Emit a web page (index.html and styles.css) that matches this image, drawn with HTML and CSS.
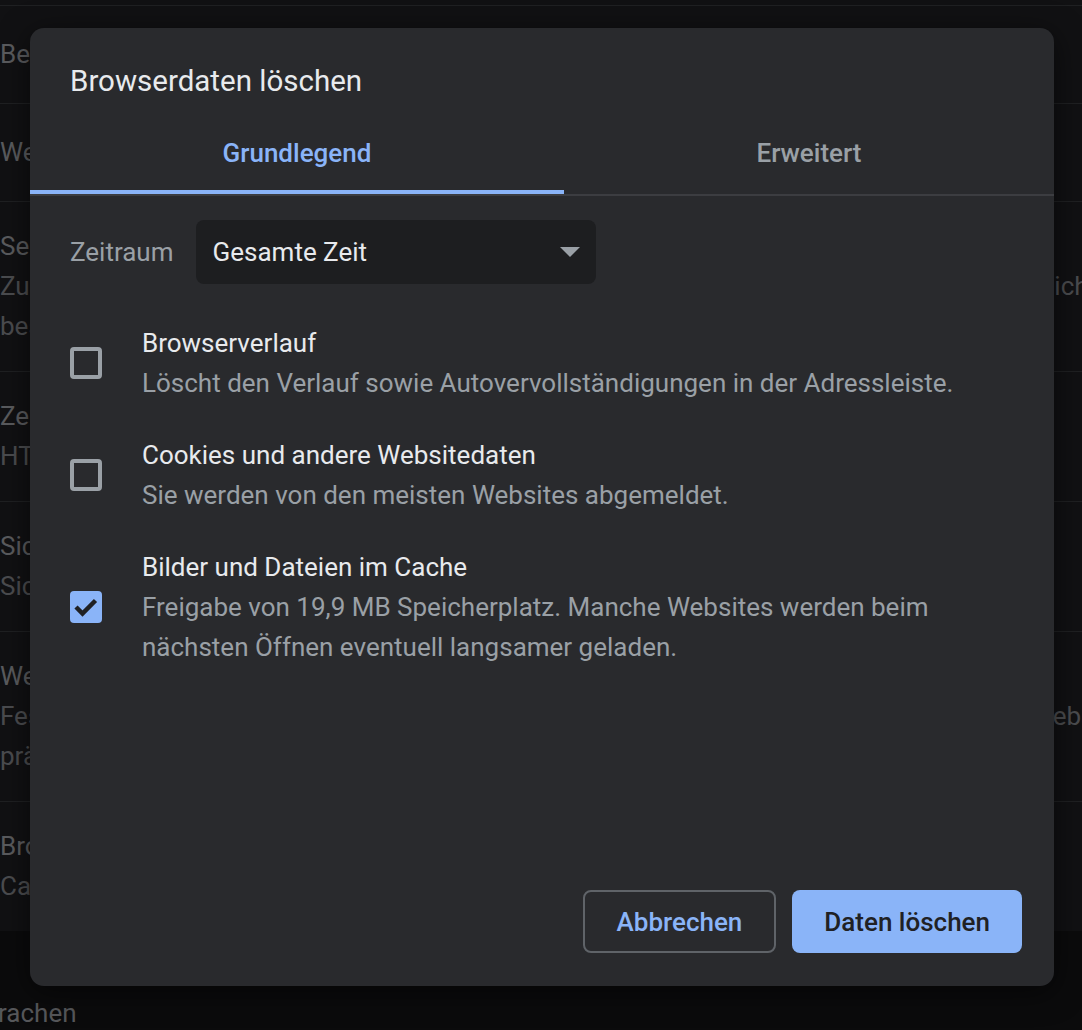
FILE: index.html
```html
<!DOCTYPE html>
<html lang="de">
<head>
<meta charset="utf-8">
<title>Browserdaten löschen</title>
<link rel="stylesheet" href="styles.css">
</head>
<body>
<div class="page">
  <div class="card">
    <div class="row single"><div class="primary">Bei der Suche und beim Eintippen in die Adressleiste Vervollständigungen verwenden</div></div>
    <div class="row single"><div class="primary">Websites die Überprüfung erlauben, ob Zahlungsmethoden gespeichert sind</div></div>
    <div class="row">
      <div class="primary">Seiten vorab laden, um das Surfen und die Suche zu beschleunigen</div>
      <div class="secondary line"><span class="lead lead-a">Zum Laden von Seiten werden Cookies verwendet, um Ihre Einstellungen zu speichern, auch wenn Sie diese Seiten</span><span>nicht besuchen</span></div>
      <div class="secondary">besuchen</div>
    </div>
    <div class="row">
      <div class="primary">Zertifikate verwalten</div>
      <div class="secondary">HTTPS/SSL-Zertifikate und -Einstellungen verwalten</div>
    </div>
    <div class="row">
      <div class="primary">Sicherheitsschlüssel verwalten</div>
      <div class="secondary">Sicherheitsschlüssel zurücksetzen und PINs erstellen</div>
    </div>
    <div class="row">
      <div class="primary">Website-Einstellungen</div>
      <div class="secondary line"><span class="lead lead-b">Festlegen, welche Informationen Websites nutzen und welche Inhalte sie Ihnen</span><span>Websites</span></div>
      <div class="secondary">präsentieren dürfen</div>
    </div>
    <div class="row">
      <div class="primary">Browserdaten löschen</div>
      <div class="secondary">Cache leeren, Cookies und andere Websitedaten löschen</div>
    </div>
  </div>
  <div class="heading">Sprachen</div>
</div>

<div class="dialog" role="dialog" aria-label="Browserdaten löschen">
  <div class="dialog-title">Browserdaten löschen</div>
  <div class="tabs">
    <div class="tab active">Grundlegend</div>
    <div class="tab">Erweitert</div>
  </div>
  <div class="dialog-body">
    <div class="range">
      <span class="range-label">Zeitraum</span>
      <div class="select">
        <span>Gesamte Zeit</span>
        <svg class="arrow" width="20" height="10" viewBox="0 0 20 10"><path d="M0 0 L20 0 L10 10 Z" fill="#9aa0a6"/></svg>
      </div>
    </div>
    <div class="items">
      <div class="item">
        <span class="box"></span>
        <div class="item-text">
          <div class="item-title">Browserverlauf</div>
          <div class="item-desc">Löscht den Verlauf sowie Autovervollständigungen in der Adressleiste.</div>
        </div>
      </div>
      <div class="item">
        <span class="box"></span>
        <div class="item-text">
          <div class="item-title">Cookies und andere Websitedaten</div>
          <div class="item-desc">Sie werden von den meisten Websites abgemeldet.</div>
        </div>
      </div>
      <div class="item">
        <span class="box checked"><svg width="32" height="32" viewBox="0 0 32 32"><path d="M6 16 L12.5 22.5 L25.5 9.5" fill="none" stroke="#202124" stroke-width="4.5"/></svg></span>
        <div class="item-text">
          <div class="item-title">Bilder und Dateien im Cache</div>
          <div class="item-desc">Freigabe von 19,9 MB Speicherplatz. Manche Websites werden beim nächsten Öffnen eventuell langsamer geladen.</div>
        </div>
      </div>
    </div>
  </div>
  <div class="actions">
    <button class="btn cancel">Abbrechen</button>
    <button class="btn action">Daten löschen</button>
  </div>
</div>
</body>
</html>
```

FILE: styles.css
```css
* { box-sizing: border-box; }
html, body {
  margin: 0;
  width: 1082px;
  height: 1030px;
  overflow: hidden;
  background: #0b0b0c;
  font-family: Roboto, "Noto Sans", "Liberation Sans", sans-serif;
}
body { position: relative; }

.page {
  margin-left: -40px;
  width: 1160px;
}
.card {
  background: #111113;
  padding-top: 5px;
}
.row {
  border-top: 1px solid #1f2022;
  padding: 24px 0 25px 40px;
  font-size: 26px;
  line-height: 40px;
  white-space: nowrap;
  overflow: hidden;
}
.row.single { padding: 28px 0 29px 40px; }
.primary { color: #5a5b5e; }
.secondary { color: #4b4c4f; }
.line { display: flex; }
.lead { display: inline-block; overflow: hidden; flex: none; }
.lead-a { width: 1040px; }
.lead-b { width: 1030px; }

.heading {
  padding: 62px 0 0 8px;
  font-size: 26px;
  color: #56575a;
  line-height: 40px;
}

.dialog {
  position: absolute;
  left: 30px;
  top: 28px;
  width: 1024px;
  height: 958px;
  background: #292a2d;
  border-radius: 14px;
  box-shadow: 0 6px 30px rgba(0, 0, 0, 0.55);
  display: flex;
  flex-direction: column;
  color: #e8eaed;
}
.dialog-title {
  padding: 36px 40px 0;
  font-size: 29.5px;
  line-height: 34px;
  color: #e8eaed;
}
.tabs {
  display: flex;
  margin-top: 14px;
  border-bottom: 2px solid #3c3d41;
}
.tab {
  flex: 1 1 auto;
  text-align: center;
  font-size: 26px;
  font-weight: 500;
  line-height: 32px;
  padding: 25px 0 21px;
  color: #9aa0a6;
  border-bottom: 4px solid transparent;
}
.tab.active {
  color: #8ab4f8;
  border-bottom-color: #8ab4f8;
}
.dialog-body {
  padding: 24px 40px 0;
}
.range {
  display: flex;
  align-items: center;
  gap: 22px;
}
.range-label {
  font-size: 26px;
  color: #9aa0a6;
}
.select {
  width: 400px;
  height: 64px;
  background: #1d1e20;
  border-radius: 8px;
  display: flex;
  align-items: center;
  justify-content: space-between;
  padding: 0 16px 0 17px;
  font-size: 26px;
  color: #e8eaed;
}
.arrow { display: block; }

.items {
  margin-top: 39px;
  display: flex;
  flex-direction: column;
  gap: 32px;
}
.item {
  display: flex;
  align-items: center;
  gap: 40px;
}
.box {
  flex: none;
  width: 32px;
  height: 32px;
  border: 4px solid #9aa0a6;
  border-radius: 4px;
}
.box.checked {
  border: none;
  background: #8ab4f8;
}
.box svg { display: block; }
.item-text {
  font-size: 26px;
  line-height: 40px;
}
.item-title { color: #e8eaed; }
.item-desc { color: #9aa0a6; }

.actions {
  margin-top: auto;
  display: flex;
  justify-content: flex-end;
  gap: 16px;
  padding: 0 32px 33px;
}
.btn {
  height: 63px;
  padding: 0 32px;
  border-radius: 8px;
  font-family: inherit;
  font-size: 26px;
  font-weight: 500;
  cursor: pointer;
}
.btn.cancel {
  background: transparent;
  border: 2px solid #5f6368;
  color: #8ab4f8;
}
.btn.action {
  background: #8ab4f8;
  border: none;
  color: #202124;
}
```
